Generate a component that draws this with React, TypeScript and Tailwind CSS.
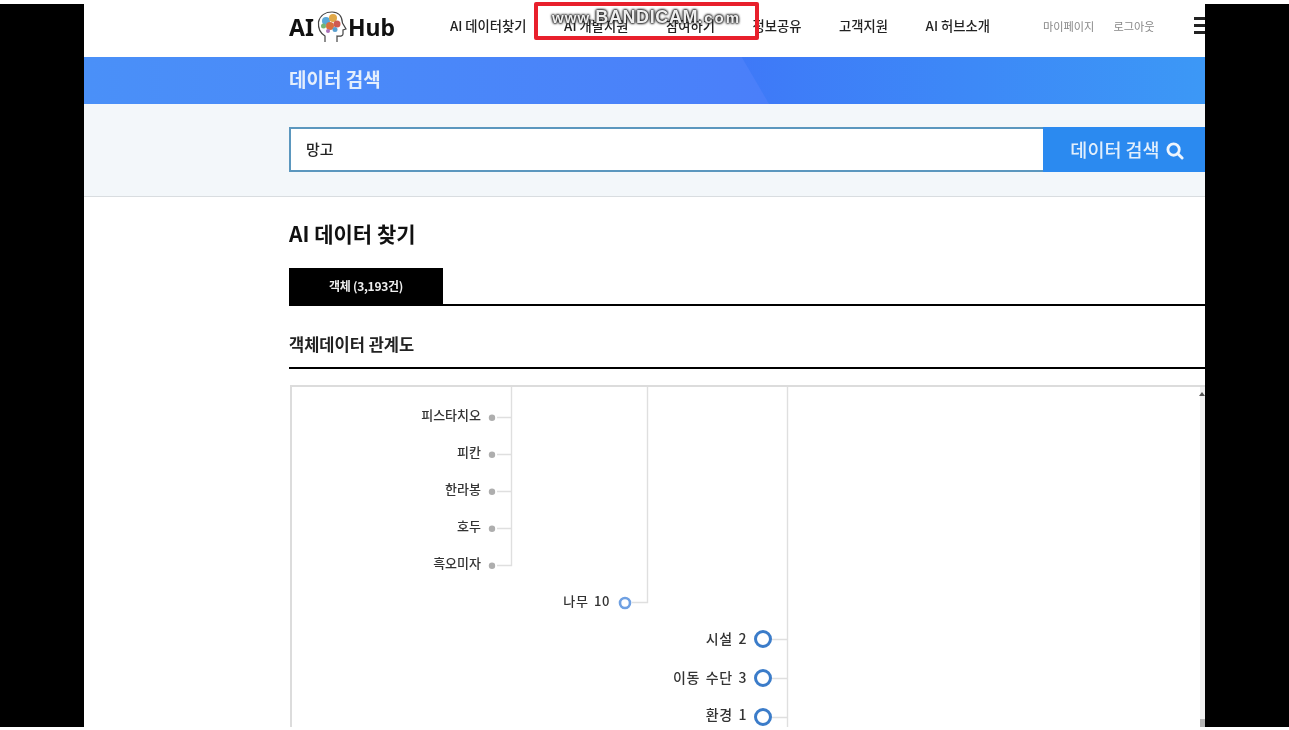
import React from "react";

const smallNodes = [
  { label: "피스타치오", y: 30.7 },
  { label: "피칸", y: 67.7 },
  { label: "한라봉", y: 104.7 },
  { label: "호두", y: 141.7 },
  { label: "흑오미자", y: 178.7 },
];
const bigNodes = [
  { label: "시설 2", y: 252, textTop: 242 },
  { label: "이동 수단 3", y: 291, textTop: 281 },
  { label: "환경 1", y: 330, textTop: 318 },
];

function Logo() {
  return (
    <div className="flex items-center text-[23px] font-bold text-[#111] font-['Noto_Sans','Noto_Sans_CJK_KR',sans-serif] leading-none">
      <span>AI</span>
      <svg width="30" height="32" viewBox="0 0 30 32" className="ml-[3px] mr-[1px] -mt-[2px]">
        <path d="M8 31 V25 C3 22 1 17 1.5 11 C3 4 9 1 15 1 C21 1 25 5 25.5 12 L29 18 L26 19 V23 C26 25 24 25.500 20 25 V31" fill="none" stroke="#444" strokeWidth="1.2" />
        <circle cx="9" cy="10" r="4" fill="#5aa8d8" />
        <circle cx="16" cy="7" r="4" fill="#e0a848" />
        <circle cx="20" cy="13" r="3.5" fill="#cf5a52" />
        <circle cx="13" cy="15" r="4" fill="#d9703e" />
        <circle cx="6.500" cy="15" r="2.5" fill="#74b574" />
        <circle cx="18" cy="18.500" r="2.5" fill="#5aa0d0" />
        <circle cx="11" cy="20" r="2" fill="#a86fb8" />
      </svg>
      <span>Hub</span>
    </div>
  );
}

function Diagram() {
  return (
    <div className="relative w-[915px] h-[345px] border-l-2 border-t-2 border-[#dcdcdc] bg-white overflow-hidden">
      <svg width="913" height="343" className="absolute left-0 top-0" fill="none">
        <path d="M219.5 0 V178.500 H205 M205 30.500 H219.500 M205 67.500 H219.500 M205 104.500 H219.500 M205 141.500 H219.500" stroke="#dfdfdf" strokeWidth="1.4" />
        <path d="M355.5 0 V215.500 H340" stroke="#dfdfdf" strokeWidth="1.4" />
        <path d="M495.5 0 V343 M480 252.500 H495.500 M480 291.500 H495.500 M480 330.500 H495.500" stroke="#dfdfdf" strokeWidth="1.4" />
        {smallNodes.map((n) => (
          <circle key={n.label} cx="200" cy={n.y} r="3.2" fill="#aeaeae" />
        ))}
        <circle cx="333" cy="216" r="5" stroke="#6fa0e2" strokeWidth="2.6" fill="#fff" />
        {bigNodes.map((n) => (
          <circle key={n.label} cx="471" cy={n.y} r="7.5" stroke="#3b7cc9" strokeWidth="3" fill="#fff" />
        ))}
      </svg>
      {smallNodes.map((n) => (
        <span key={n.label} className="absolute right-[724px] text-[13px] font-medium leading-[16px] text-[#333]" style={{ top: n.y - 10.7 }}>
          {n.label}
        </span>
      ))}
      <span className="absolute right-[595px] top-[205px] text-[13px] font-medium leading-[18px] tracking-[0.6px] [word-spacing:2px] text-[#333]">나무 10</span>
      {bigNodes.map((n) => (
        <span key={n.label} className="absolute right-[458px] text-[14px] font-medium leading-[18px] tracking-[0.6px] [word-spacing:2px] text-[#333]" style={{ top: n.textTop }}>
          {n.label}
        </span>
      ))}
      <div className="absolute right-0 top-0 bottom-0 w-[5px] bg-[#f1f1f1]" />
      <div className="absolute right-0 bottom-0 w-[5px] h-[11px] bg-[#b5b5b5]" />
      <div className="absolute right-0 top-[5px] w-0 h-0 border-x-[3px] border-b-[4px] border-x-transparent border-b-[#555]" />
    </div>
  );
}

export default function App() {
  return (
    <div className="relative h-[730px] w-full overflow-hidden bg-white pt-1 pb-[3px] font-['Noto_Sans_CJK_KR','Noto_Sans',sans-serif] blur-[0.5px]">
      <div className="flex h-full bg-black">
        <div className="w-[84px] shrink-0" />
        <main className="w-[1121px] shrink-0 overflow-hidden bg-white">
          <header className="flex h-[53px] items-center pl-[205px] pb-[6px] whitespace-nowrap">
            <Logo />
            <nav className="ml-[55px] -mt-[3px] flex gap-[37.6px] text-[13.3px] font-medium text-[#222]">
              <span>AI 데이터찾기</span>
              <span>AI 개발지원</span>
              <span>참여하기</span>
              <span>정보공유</span>
              <span>고객지원</span>
              <span>AI 허브소개</span>
            </nav>
            <div className="ml-[53px] -mt-[3px] flex gap-[19px] text-[11.2px] text-[#888]">
              <span>마이페이지</span>
              <span>로그아웃</span>
            </div>
            <div className="ml-[39px] -mt-[4px] flex w-[20px] shrink-0 flex-col gap-[4px]">
              <div className="h-[3px] bg-[#222]" />
              <div className="h-[3px] bg-[#222]" />
              <div className="h-[3px] bg-[#222]" />
            </div>
          </header>

          <div className="relative h-[47px] bg-gradient-to-r from-[#4a8ff8] via-[#3f72f8] to-[#3c98f6] pl-[205px]">
            <div className="absolute left-0 top-0 h-full w-[685px] bg-gradient-to-r from-[#4a90f8] to-[#4a7ffa] [clip-path:polygon(0_0,96%_0,100%_100%,0_100%)]" />
            <h1 className="relative text-[19px] font-bold leading-[44px] text-[#e4eefc]">데이터 검색</h1>
          </div>

          <section className="h-[93px] border-b border-[#d9dde0] bg-[#f3f7fa] pl-[205px] pt-[23px]">
            <div className="flex h-[45px] w-[916px]">
              <div className="flex w-[754px] items-center border-2 border-r-0 border-[#5b97be] bg-white pl-[15px] text-[15px] font-medium text-[#222]">
                망고
              </div>
              <button className="flex flex-1 items-center justify-center gap-[6px] pl-[6px] bg-[#2b8af0] text-[18.5px] font-medium text-[#e2effc]">
                데이터 검색
                <svg width="18" height="18" viewBox="0 0 19 19" fill="none" stroke="#eef5fd" strokeWidth="3" className="mt-[2px]">
                  <circle cx="8" cy="8" r="6" />
                  <path d="M12.5 12.5 L17 17" strokeLinecap="round" />
                </svg>
              </button>
            </div>
          </section>

          <section className="pl-[205px]">
            <h2 className="mt-[19px] text-[21px] font-bold leading-[34px] text-[#111]">AI 데이터 찾기</h2>
            <div className="mt-[18px] h-[38px] border-b-2 border-black">
              <div className="flex h-[36px] w-[154px] items-center justify-center bg-black text-[12px] font-bold tracking-[-0.3px] text-[#eee]">
                객체 (3,193건)
              </div>
            </div>
            <h3 className="mt-[24px] text-[16.5px] font-bold leading-[28px] text-[#222]">객체데이터 관계도</h3>
            <div className="mt-[9px] h-[2px] bg-black" />
            <div className="ml-[1px] mt-[16px]">
              <Diagram />
            </div>
          </section>
        </main>
        <div className="flex-1" />
      </div>

      <div className="absolute left-[534px] top-[2px] flex h-[38px] w-[225px] justify-center rounded-[2px] border-[4px] border-[#e8202c]">
        <span className="mt-[2px] flex items-baseline font-bold font-['Liberation_Sans',sans-serif] leading-none text-[#eeeeee] [text-shadow:0_0_2px_#222,0_0_2px_#222,0_0_3px_#222,0_0_3px_#444]">
          <span className="text-[15px] tracking-[1.2px]">www.</span>
          <span className="text-[18px] tracking-[0.6px]">BANDICAM</span>
          <span className="text-[15px] tracking-[2px]">.com</span>
        </span>
      </div>
    </div>
  );
}
